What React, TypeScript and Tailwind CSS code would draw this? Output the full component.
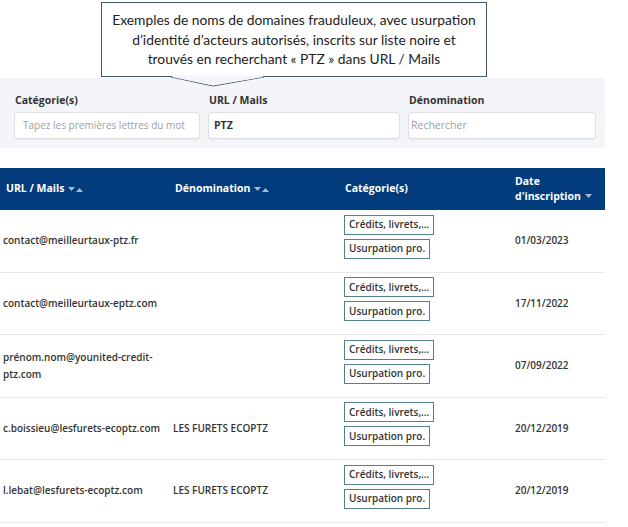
const rows = [
  { mail: 'contact@meilleurtaux-ptz.fr', denom: '', date: '01/03/2023' },
  { mail: 'contact@meilleurtaux-eptz.com', denom: '', date: '17/11/2022' },
  { mail: 'prénom.nom@younited-credit-ptz.com', denom: '', date: '07/09/2022' },
  { mail: 'c.boissieu@lesfurets-ecoptz.com', denom: 'LES FURETS ECOPTZ', date: '20/12/2019' },
  { mail: 'l.lebat@lesfurets-ecoptz.com', denom: 'LES FURETS ECOPTZ', date: '20/12/2019' },
];

const SortIcons = ({ up = true }: { up?: boolean }) => (
  <span className="ml-1 inline-flex items-center gap-[1px] text-[#aab8cc]">
    <svg width="7" height="5" viewBox="0 0 7 5">
      <path d="M0 0h7L3.5 4z" fill="currentColor" />
    </svg>
    {up && (
      <svg width="7" height="5" viewBox="0 0 7 5">
        <path d="M0 5h7L3.5 1z" fill="currentColor" />
      </svg>
    )}
  </span>
);

const Badge = ({ children }: { children: React.ReactNode }) => (
  <div className="flex h-[20px] items-center whitespace-nowrap border border-[#557f8c] bg-white px-[4px] text-[10px] font-semibold text-[#333]">
    {children}
  </div>
);

export default function App() {
  return (
    <div className="relative h-[527px] w-[628px] overflow-hidden bg-white font-['Open_Sans',sans-serif]">
      <div className="relative z-10 ml-[101px] mt-[2px] flex h-[75px] w-[386px] flex-col items-center justify-center border border-[#44586b] bg-white font-['Lato',sans-serif] text-[13.8px] leading-[19.5px] text-[#222]">
        <p className="text-center">
          Exemples de noms de domaines frauduleux, avec usurpation
          <br />
          d’identité d’acteurs autorisés, inscrits sur liste noire et
          <br />
          trouvés en recherchant « PTZ » dans URL / Mails
        </p>
      </div>
      <svg
        className="absolute left-[170px] top-[75px] z-20"
        width="96"
        height="14"
        viewBox="0 0 96 14"
      >
        <path d="M1 2L43 11L94 2" fill="#f3f5f8" stroke="#44586b" strokeWidth="1" />
        <path d="M2 0.5H93V2L43 10.5L2 2z" fill="#f3f5f8" />
      </svg>

      <div className="mt-[1px] grid h-[70px] w-[605px] grid-cols-[186px_192px_188px] gap-x-[8px] bg-[#f3f5f8] pl-[14px] pt-[15px]">
        {[
          { label: 'Catégorie(s)', value: '', ph: 'Tapez les premières lettres du mot', phCls: 'text-[10px] pl-[8px]' },
          { label: 'URL / Mails', value: 'PTZ', ph: '', phCls: '' },
          { label: 'Dénomination', value: '', ph: 'Rechercher', phCls: 'text-[10.5px] pl-[2px]' },
        ].map((f) => (
          <div key={f.label} className="flex flex-col">
            <span className="mb-[5px] pl-[1px] text-[10.5px] font-bold leading-[14px] text-[#333]">
              {f.label}
            </span>
            <div className="flex h-[27px] items-center rounded-[3px] border border-[#dcdfe4] bg-white shadow-[0_1px_1px_rgba(0,0,0,0.04)]">
              {f.value ? (
                <span className="pl-[5px] text-[10.5px] font-bold text-[#333]">{f.value}</span>
              ) : (
                <span className={`${f.phCls} text-[#9a9fa6]`}>{f.ph}</span>
              )}
            </div>
          </div>
        ))}
      </div>

      <div className="mt-[20px] w-[605px]">
        <div className="grid h-[42px] grid-cols-[169px_170px_170px_1fr] items-center bg-[#033c7c] text-[10.5px] font-bold text-white">
          <div className="flex items-center pl-[6px]">
            URL / Mails <SortIcons />
          </div>
          <div className="flex items-center pl-[6px]">
            Dénomination <SortIcons />
          </div>
          <div className="pl-[6px]">Catégorie(s)</div>
          <div className="pl-[6px] leading-[15px]">
            Date
            <br />
            <span className="inline-flex items-center">
              d'inscription <SortIcons up={false} />
            </span>
          </div>
        </div>
        {rows.map((r, i) => (
          <div
            key={i}
            className="grid h-[62.5px] grid-cols-[169px_170px_170px_1fr] items-center border-b border-[#e6e8eb] text-[10px] font-semibold text-[#333]"
          >
            <div className="pl-[3px] pr-[8px] leading-[17px]">{r.mail}</div>
            <div className="pl-[4px]">{r.denom}</div>
            <div className="flex flex-col items-start gap-[4px] pb-[8px] pl-[5px]">
              <Badge>Crédits, livrets,...</Badge>
              <Badge>Usurpation pro.</Badge>
            </div>
            <div className="pl-[6px]">{r.date}</div>
          </div>
        ))}
      </div>
    </div>
  );
}
